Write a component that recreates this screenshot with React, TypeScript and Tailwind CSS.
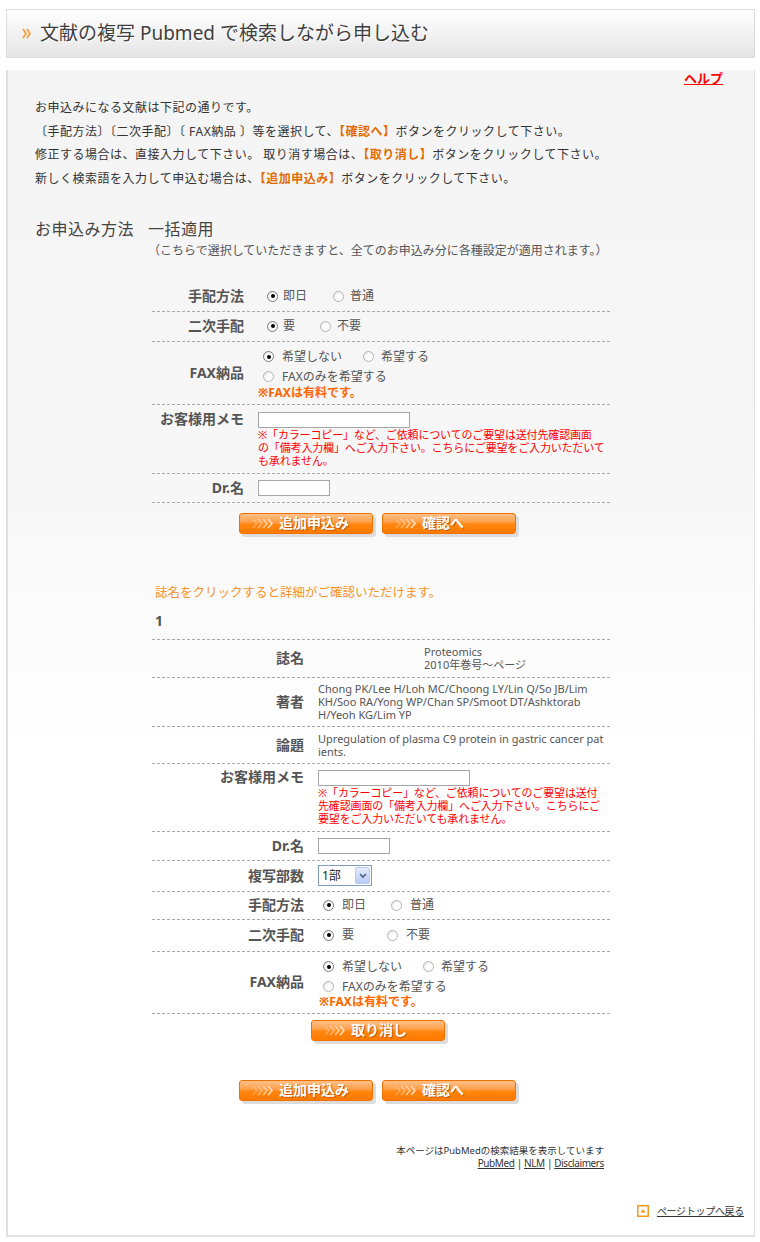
import React from "react";

function Radio({ checked }: { checked?: boolean }) {
  return (
    <span
      className={
        "inline-flex w-[11px] h-[11px] shrink-0 items-center justify-center rounded-full border bg-[radial-gradient(circle_at_65%_65%,#ffffff_35%,#e2e2e2_100%)] " +
        (checked ? "border-[#7a7a7a]" : "border-[#b4b4b4]")
      }
    >
      {checked && <span className="block w-[4px] h-[4px] rounded-full bg-black" />}
    </span>
  );
}

function Opt({ checked, label, w, gap }: { checked?: boolean; label: string; w: string; gap: string }) {
  return (
    <span className={"inline-flex items-center shrink-0 " + w + " " + gap}>
      <Radio checked={checked} />
      <span className="text-[12px] text-[#555] whitespace-nowrap">{label}</span>
    </span>
  );
}

function Chevrons() {
  return (
    <svg width="22" height="11" viewBox="0 0 22 11" className="shrink-0">
      <g fill="none" strokeWidth="1.7" stroke="#ffdcb8">
        <polyline points="1,1 5,5.5 1,10" opacity="0.35" />
        <polyline points="6,1 10,5.5 6,10" opacity="0.55" />
        <polyline points="11,1 15,5.5 11,10" opacity="0.75" />
        <polyline points="16,1 20,5.5 16,10" opacity="1" />
      </g>
    </svg>
  );
}

function OrangeButton({ label }: { label: string }) {
  return (
    <div className="relative flex w-[134px] h-[21px] shrink-0 items-center rounded-[3px] border border-[#f07000] bg-[linear-gradient(to_bottom,#ffc08a_0%,#ffa04a_42%,#ff860f_55%,#ff7a00_100%)] pl-[12px] shadow-[3px_3px_0_#dcdcdc]">
      <Chevrons />
      <span className="ml-[5px] text-[14px] font-bold leading-none text-white [text-shadow:1px_1px_0_#c85a00]">
        {label}
      </span>
    </div>
  );
}

function Input({ w }: { w: string }) {
  return <div className={"h-[16px] border border-[#a5a5a5] bg-white " + w} />;
}

const note1 = [
  "※「カラーコピー」など、ご依頼についてのご要望は送付先確認画面",
  "の「備考入力欄」へご入力下さい。こちらにご要望をご入力いただいて",
  "も承れません。",
];
const note2 = [
  "※「カラーコピー」など、ご依頼についてのご要望は送付",
  "先確認画面の「備考入力欄」へご入力下さい。こちらにご",
  "要望をご入力いただいても承れません。",
];

export default function App() {
  const dashed = "border-b border-dashed border-[#a9a9a9]";
  const label1 = "w-[98px] shrink-0 pr-[6px] text-right text-[14px] font-bold text-[#555] leading-[18px] whitespace-nowrap";
  const label2 = "w-[158px] shrink-0 pr-[6px] text-right text-[14px] font-bold text-[#555] leading-[18px] whitespace-nowrap";
  return (
    <div className="w-[760px] min-h-[1242px] bg-white pt-[9px] font-['Noto_Sans','Noto_Sans_CJK_JP',sans-serif] text-[#333]">
      <div className="ml-[6px] w-[749px]">
        {/* Header */}
        <div className="flex h-[49px] items-center border border-[#dcdcdc] bg-[linear-gradient(to_bottom,#ffffff,#e5e5e5)] pl-[15px]">
          <svg width="9" height="11" viewBox="0 0 9 11">
            <g fill="none" stroke="#f7a238" strokeWidth="1.8">
              <polyline points="1,1 4,5.5 1,10" />
              <polyline points="5,1 8,5.5 5,10" />
            </g>
          </svg>
          <span className="ml-[9px] text-[19px] leading-none text-[#3f3f3f] [text-shadow:1px_1px_0_#ffffff]">
            文献の複写 Pubmed で検索しながら申し込む
          </span>
        </div>

        {/* Content */}
        <div className="border-l-2 border-r border-b-2 border-[#e0e0e0] bg-[linear-gradient(to_bottom,#f4f4f4_0px,#f7f7f7_420px,#ffffff_680px)] pb-[17px]">
          <div className="mt-[12px] flex h-[16px] justify-end pr-[31px]">
            <span className="text-[13px] font-bold leading-[16px] text-[#ff0000] underline">ヘルプ</span>
          </div>

          <div className="mt-[10px] pl-[27px] text-[12px] leading-[23.7px] tracking-[0.5px] text-[#333] whitespace-nowrap">
            <div>お申込みになる文献は下記の通りです。</div>
            <div>
              〔手配方法〕〔二次手配〕〔 FAX納品 〕等を選択して、
              <span className="font-bold text-[#e26b00]">【確認へ】</span>ボタンをクリックして下さい。
            </div>
            <div>
              修正する場合は、直接入力して下さい。 取り消す場合は、
              <span className="font-bold text-[#e26b00]">【取り消し】</span>ボタンをクリックして下さい。
            </div>
            <div>
              新しく検索語を入力して申込む場合は、
              <span className="font-bold text-[#e26b00]">【追加申込み】</span>ボタンをクリックして下さい。
            </div>
          </div>

          <div className="mt-[28px] flex h-[20px] items-center pl-[27px] text-[16px] leading-[20px] tracking-[0.5px] text-[#444]">
            <span className="w-[113px]">お申込み方法</span>
            <span>一括適用</span>
          </div>
          <div className="mt-[4px] pl-[140px] text-[12px] leading-[16px] text-[#555] whitespace-nowrap">
            （こちらで選択していただきますと、全てのお申込み分に各種設定が適用されます。）
          </div>

          {/* Table 1 */}
          <div className="ml-[144px] mt-[23px] w-[458px]">
            <div className={"flex h-[30px] items-center " + dashed}>
              <div className={label1}>手配方法</div>
              <div className="flex items-center pl-[8px]">
                <span className="ml-[9px] flex">
                  <Opt checked label="即日" w="w-[66px]" gap="gap-[5px]" />
                  <Opt label="普通" w="w-[60px]" gap="gap-[6px]" />
                </span>
              </div>
            </div>
            <div className={"flex h-[30px] items-center " + dashed}>
              <div className={label1}>二次手配</div>
              <div className="flex items-center pl-[8px]">
                <span className="ml-[9px] flex">
                  <Opt checked label="要" w="w-[53px]" gap="gap-[5px]" />
                  <Opt label="不要" w="w-[60px]" gap="gap-[6px]" />
                </span>
              </div>
            </div>
            <div className={"flex h-[63px] items-center " + dashed}>
              <div className={label1}>FAX納品</div>
              <div className="flex h-full flex-col pl-[8px] pt-[5px]">
                <div className="ml-[5px] flex h-[20px] items-center">
                  <Opt checked label="希望しない" w="w-[100px]" gap="gap-[8px]" />
                  <Opt label="希望する" w="w-[80px]" gap="gap-[7px]" />
                </div>
                <div className="ml-[5px] flex h-[20px] items-center">
                  <Opt label="FAXのみを希望する" w="w-[140px]" gap="gap-[8px]" />
                </div>
                <div className="-mt-[1px] text-[12px] font-bold leading-[13px] text-[#ff6600] whitespace-nowrap">
                  ※FAXは有料です。
                </div>
              </div>
            </div>
            <div className={"flex h-[69px] items-start " + dashed}>
              <div className={label1 + " pt-[5px]"}>お客様用メモ</div>
              <div className="flex flex-col pl-[8px] pt-[7px]">
                <Input w="w-[152px]" />
                <div className="text-[11px] leading-[13px] tracking-[-0.15px] text-[#ff0000] whitespace-nowrap">
                  {note1.map((l) => (
                    <div key={l}>{l}</div>
                  ))}
                </div>
              </div>
            </div>
            <div className={"flex h-[29px] items-center " + dashed}>
              <div className={label1}>Dr.名</div>
              <div className="pl-[8px]">
                <Input w="w-[72px]" />
              </div>
            </div>

            <div className="mt-[10px] flex h-[24px] gap-[9px] pl-[87px]">
              <OrangeButton label="追加申込み" />
              <OrangeButton label="確認へ" />
            </div>
          </div>

          {/* Section 2 */}
          <div className="mt-[48px] pl-[147px] text-[12.5px] leading-[16px] text-[#f7931e] whitespace-nowrap">
            誌名をクリックすると詳細がご確認いただけます。
          </div>
          <div className="mt-[11px] pl-[147px] text-[14px] font-bold leading-[18px] text-[#555]">1</div>

          <div className="ml-[144px] mt-[9px] w-[458px]">
            <div className="border-t border-dashed border-[#a9a9a9]" />
            <div className={"flex h-[38px] items-center " + dashed}>
              <div className={label2}>誌名</div>
              <div className="pl-[114px] text-[11px] leading-[13px] text-[#555] whitespace-nowrap">
                <div>Proteomics</div>
                <div>2010年巻号～ページ</div>
              </div>
            </div>
            <div className={"flex h-[49px] items-center " + dashed}>
              <div className={label2}>著者</div>
              <div className="pl-[8px] text-[11px] leading-[13px] text-[#555] whitespace-nowrap">
                <div>Chong PK/Lee H/Loh MC/Choong LY/Lin Q/So JB/Lim</div>
                <div>KH/Soo RA/Yong WP/Chan SP/Smoot DT/Ashktorab</div>
                <div>H/Yeoh KG/Lim YP</div>
              </div>
            </div>
            <div className={"flex h-[37px] items-center " + dashed}>
              <div className={label2}>論題</div>
              <div className="pl-[8px] text-[11px] leading-[13px] text-[#555] whitespace-nowrap">
                <div>Upregulation of plasma C9 protein in gastric cancer pat</div>
                <div>ients.</div>
              </div>
            </div>
            <div className={"flex h-[68px] items-start " + dashed}>
              <div className={label2 + " pt-[4px]"}>お客様用メモ</div>
              <div className="flex flex-col pl-[8px] pt-[6px]">
                <Input w="w-[152px]" />
                <div className="text-[11px] leading-[13px] tracking-[-0.15px] text-[#ff0000] whitespace-nowrap">
                  {note2.map((l) => (
                    <div key={l}>{l}</div>
                  ))}
                </div>
              </div>
            </div>
            <div className={"flex h-[29px] items-center " + dashed}>
              <div className={label2}>Dr.名</div>
              <div className="pl-[8px]">
                <Input w="w-[72px]" />
              </div>
            </div>
            <div className={"flex h-[31px] items-center " + dashed}>
              <div className={label2}>複写部数</div>
              <div className="pl-[8px]">
                <div className="flex h-[21px] w-[54px] items-center justify-between border border-[#7f9db9] bg-white">
                  <span className="pl-[3px] text-[12px] leading-none text-[#222]">1部</span>
                  <span className="mr-[1px] flex h-[17px] w-[15px] items-center justify-center rounded-[2px] border border-[#b9cbef] bg-[linear-gradient(to_bottom,#e3ebfd,#b9ccf6)]">
                    <svg width="8" height="6" viewBox="0 0 8 6">
                      <polyline points="1,1 4,4 7,1" fill="none" stroke="#4d6185" strokeWidth="1.6" />
                    </svg>
                  </span>
                </div>
              </div>
            </div>
            <div className={"flex h-[28px] items-center " + dashed}>
              <div className={label2}>手配方法</div>
              <div className="flex items-center pl-[8px]">
                <span className="ml-[5px] flex">
                  <Opt checked label="即日" w="w-[68px]" gap="gap-[8px]" />
                  <Opt label="普通" w="w-[60px]" gap="gap-[8px]" />
                </span>
              </div>
            </div>
            <div className={"flex h-[32px] items-center " + dashed}>
              <div className={label2}>二次手配</div>
              <div className="flex items-center pl-[8px]">
                <span className="ml-[5px] flex">
                  <Opt checked label="要" w="w-[64px]" gap="gap-[8px]" />
                  <Opt label="不要" w="w-[60px]" gap="gap-[8px]" />
                </span>
              </div>
            </div>
            <div className={"flex h-[62px] items-center " + dashed}>
              <div className={label2}>FAX納品</div>
              <div className="flex h-full flex-col pl-[8px] pt-[5px]">
                <div className="ml-[5px] flex h-[20px] items-center">
                  <Opt checked label="希望しない" w="w-[100px]" gap="gap-[8px]" />
                  <Opt label="希望する" w="w-[80px]" gap="gap-[7px]" />
                </div>
                <div className="ml-[5px] flex h-[20px] items-center">
                  <Opt label="FAXのみを希望する" w="w-[140px]" gap="gap-[8px]" />
                </div>
                <div className="-mt-[2px] pl-[1px] text-[12px] font-bold leading-[13px] text-[#ff6600] whitespace-nowrap">
                  ※FAXは有料です。
                </div>
              </div>
            </div>

            <div className="mt-[6px] flex h-[24px] pl-[159px]">
              <OrangeButton label="取り消し" />
            </div>
            <div className="mt-[36px] flex h-[24px] gap-[9px] pl-[87px]">
              <OrangeButton label="追加申込み" />
              <OrangeButton label="確認へ" />
            </div>

            <div className="mt-[40px] pr-[6px] text-right leading-[13px] text-[#333] whitespace-nowrap">
              <div className="text-[9.5px]">本ページはPubMedの検索結果を表示しています</div>
              <div className="text-[10px] tracking-[-0.4px]">
                <span className="underline">PubMed</span> | <span className="underline">NLM</span> |{" "}
                <span className="underline">Disclaimers</span>
              </div>
            </div>
          </div>

          <div className="mt-[34px] flex h-[14px] items-center justify-end pr-[10px]">
            <svg width="12" height="12" viewBox="0 0 12 12" className="shrink-0">
              <rect x="0.75" y="0.75" width="10.5" height="10.5" fill="#fff" stroke="#f59a1e" strokeWidth="1.5" />
              <polygon points="3.2,7.5 6,4.3 8.8,7.5" fill="#f59a1e" />
            </svg>
            <span className="ml-[8px] text-[10px] leading-[14px] tracking-[-0.3px] text-[#333] underline whitespace-nowrap">
              ページトップへ戻る
            </span>
          </div>
        </div>
      </div>
    </div>
  );
}
